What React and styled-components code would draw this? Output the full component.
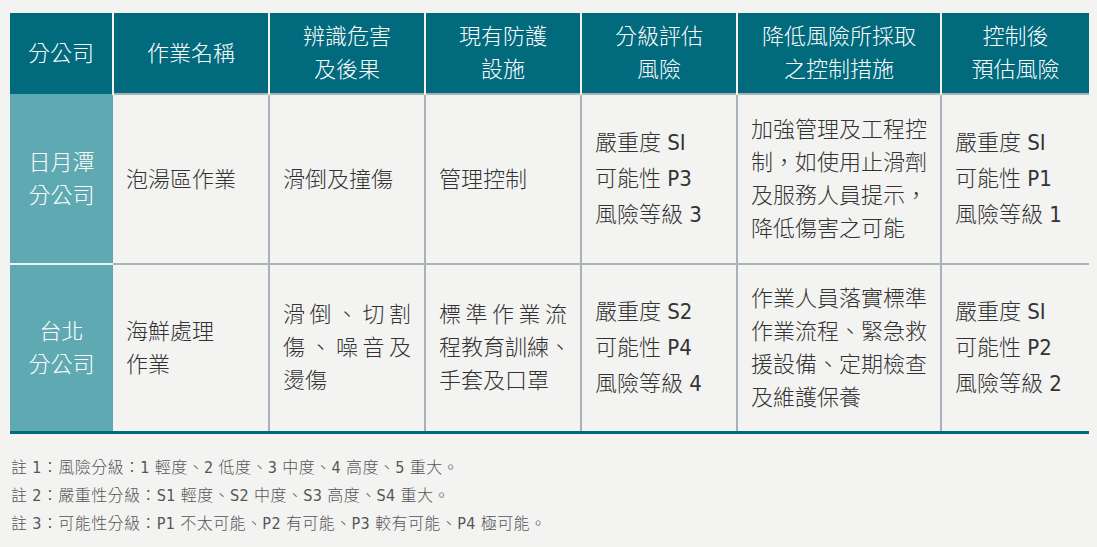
import styled, { createGlobalStyle } from 'styled-components'

const GlobalStyle = createGlobalStyle`
  html, body {
    margin: 0;
    padding: 0;
    background: #f3f3f2;
  }
  body {
    font-family: "Liberation Sans Narrow", "DejaVu Sans Condensed", "Liberation Sans", "Noto Sans CJK TC", sans-serif;
    font-weight: 300;
    color: #333;
  }
`

const Page = styled.div`
  padding: 13px 8px 0 10px;
  width: 1079px;
`

const Table = styled.table`
  width: 1079px;
  table-layout: fixed;
  border-collapse: collapse;
  border-bottom: 3px solid #016a7d;
`

const Th = styled.th`
  height: 80px;
  padding: 0;
  background: #016a7d;
  color: #fff;
  font-size: 22px;
  font-weight: 300;
  line-height: 33px;
  text-align: center;
  border-left: 2px solid #f3f3f2;

  &:first-child {
    border-left: none;
  }
`

const Row = styled.tr`
  height: ${(p) => p.$h}px;
`

const Branch = styled.td`
  background: #5faab2;
  color: #fff;
  font-size: 22px;
  line-height: 33px;
  text-align: center;
  vertical-align: middle;
  padding: 0;
  border-top: ${(p) => (p.$first ? 'none' : '2px solid #f3f3f2')};
`

const Td = styled.td`
  font-size: 22px;
  line-height: ${(p) => p.$lh || 33}px;
  vertical-align: middle;
  padding: 0 13px;
  border-left: 2px solid #a8b2ba;
  border-top: 2px solid #a8b2ba;
  color: #333;

  &:nth-child(2) {
    border-left: none;
  }
`

const Line = styled.div`
  text-align: ${(p) => (p.$fill ? 'justify' : 'left')};
  text-align-last: ${(p) => (p.$fill ? 'justify' : 'left')};
  white-space: nowrap;
`

const Notes = styled.div`
  margin-top: 20px;
  padding-left: 1px;
  font-size: 16px;
  line-height: 28px;
  letter-spacing: 0.4px;
  color: #555;
`

const headers = [
  ['分公司'],
  ['作業名稱'],
  ['辨識危害', '及後果'],
  ['現有防護', '設施'],
  ['分級評估', '風險'],
  ['降低風險所採取', '之控制措施'],
  ['控制後', '預估風險'],
]

const widths = [103, 156, 156, 156, 156, 204, 148]

// strings are plain lines, { t } lines are stretched across the cell
const Lines = ({ items }) =>
  items.map((it, i) =>
    typeof it === 'string' ? (
      <Line key={i}>{it}</Line>
    ) : (
      <Line key={i} $fill>
        {it.t}
      </Line>
    )
  )

const App = () => {
  return (
    <Page>
      <GlobalStyle />
      <Table>
        <colgroup>
          {widths.map((w, i) => (
            <col key={i} style={{ width: w }} />
          ))}
        </colgroup>
        <thead>
          <tr>
            {headers.map((h, i) => (
              <Th key={i}>
                {h.map((l) => (
                  <div key={l}>{l}</div>
                ))}
              </Th>
            ))}
          </tr>
        </thead>
        <tbody>
          <Row $h={170}>
            <Branch $first>
              <div>日月潭</div>
              <div>分公司</div>
            </Branch>
            <Td>泡湯區作業</Td>
            <Td>滑倒及撞傷</Td>
            <Td>管理控制</Td>
            <Td $lh={36}>
              <Lines items={['嚴重度 SI', '可能性 P3', '風險等級 3']} />
            </Td>
            <Td>
              <Lines items={['加強管理及工程控', '制，如使用止滑劑', '及服務人員提示，', '降低傷害之可能']} />
            </Td>
            <Td $lh={36}>
              <Lines items={['嚴重度 SI', '可能性 P1', '風險等級 1']} />
            </Td>
          </Row>
          <Row $h={168}>
            <Branch>
              <div>台北</div>
              <div>分公司</div>
            </Branch>
            <Td>
              <Lines items={['海鮮處理', '作業']} />
            </Td>
            <Td>
              <Lines items={[{ t: '滑倒、切割' }, { t: '傷、噪音及' }, '燙傷']} />
            </Td>
            <Td>
              <Lines items={[{ t: '標準作業流' }, { t: '程教育訓練、' }, '手套及口罩']} />
            </Td>
            <Td $lh={36}>
              <Lines items={['嚴重度 S2', '可能性 P4', '風險等級 4']} />
            </Td>
            <Td>
              <Lines items={['作業人員落實標準', '作業流程、緊急救', '援設備、定期檢查', '及維護保養']} />
            </Td>
            <Td $lh={36}>
              <Lines items={['嚴重度 SI', '可能性 P2', '風險等級 2']} />
            </Td>
          </Row>
        </tbody>
      </Table>
      <Notes>
        <div>註 1：風險分級：1 輕度、2 低度、3 中度、4 高度、5 重大。</div>
        <div>註 2：嚴重性分級：S1 輕度、S2 中度、S3 高度、S4 重大。</div>
        <div>註 3：可能性分級：P1 不太可能、P2 有可能、P3 較有可能、P4 極可能。</div>
      </Notes>
    </Page>
  )
}

export default App
